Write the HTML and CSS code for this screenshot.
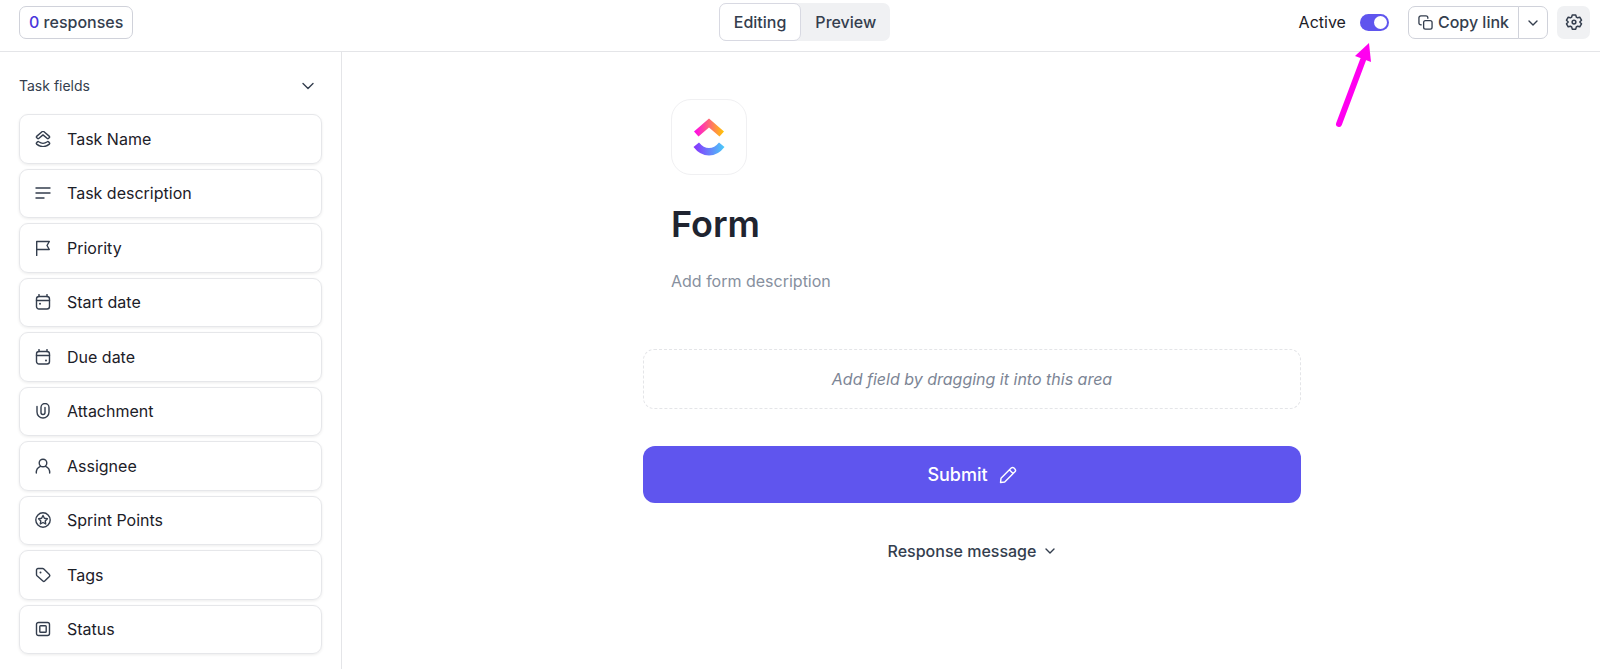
FILE: index.html
```html
<!DOCTYPE html>
<html lang="en">
<head>
  <meta charset="UTF-8">
  <meta name="viewport" content="width=device-width, initial-scale=1.0">
  <title>Form</title>
  <link rel="stylesheet" href="styles.css">
</head>
<body>

  <header class="topbar">
    <div class="topbar-left">
      <button type="button" class="btn responses"><span class="count">0</span> responses</button>
    </div>

    <div class="tabs">
      <button type="button" class="tab active">Editing</button>
      <button type="button" class="tab">Preview</button>
    </div>

    <div class="topbar-right">
      <label class="active-label" for="activeToggle">Active</label>
      <div class="toggle-wrap">
        <input type="checkbox" id="activeToggle" class="toggle" checked>
        <svg class="arrow" width="40" height="88" viewBox="0 0 40 88" aria-hidden="true">
          <path d="M6 82 30 18" stroke="#ff00f0" stroke-width="6" stroke-linecap="round" fill="none"/>
          <path d="M36 1 38 20 22 14z" fill="#ff00f0"/>
        </svg>
      </div>
      <div class="split">
        <button type="button" class="btn copy">
          <svg width="15" height="15" viewBox="0 0 16 16"><rect x="6" y="6" width="9" height="9" rx="2"/><path d="M3.500 10.500H3a2 2 0 0 1-2-2V3a2 2 0 0 1 2-2h5.500a2 2 0 0 1 2 2v.5"/></svg>
          Copy link
        </button>
        <button type="button" class="btn more" aria-label="More link options">
          <svg width="10" height="10" viewBox="0 0 10 10"><path d="M1 3l4 4 4-4"/></svg>
        </button>
      </div>
      <button type="button" class="gear" aria-label="Settings">
        <svg width="18" height="18" viewBox="0 0 24 24"><path d="M9.700 2.500h4.600l.8 2.900 1.700 1 2.900-.8 2.300 4-2.100 2.100v.6l2.100 2.100-2.300 4-2.900-.8-1.700 1-.8 2.900H9.700l-.8-2.900-1.700-1-2.900.8-2.300-4 2.100-2.100v-.6L2 9.600l2.300-4 2.900.8 1.700-1z"/><circle cx="12" cy="12" r="2.500"/></svg>
      </button>
    </div>
  </header>

  <div class="layout">
    <aside class="sidebar">
      <button type="button" class="section-title">
        Task fields
        <svg width="14" height="14" viewBox="0 0 14 14"><path d="M2 4.500l5 5 5-5"/></svg>
      </button>
      <ul class="fields">
        <li class="field">
          <svg width="16" height="16" viewBox="0 0 16 16"><path d="M1.600 5.400 7 .7q1-.8 2 0l5.400 4.700q.5.500 0 1.100l-1 1q-.5.500-1.100 0L8 3.900 3.700 7.500q-.6.500-1.100 0l-1-1q-.5-.6 0-1.100z"/><path d="M1.500 12l1-1.200q.6-.6 1.200-.1 4.300 3.300 8.600 0 .6-.5 1.200.1l1 1.200q.4.600-.1 1.100-6.400 5-12.800 0-.5-.5-.1-1.100z"/></svg>
          Task Name
        </li>
        <li class="field">
          <svg width="16" height="16" viewBox="0 0 16 16"><path d="M1 3h14M1 8h14M1 13h8"/></svg>
          Task description
        </li>
        <li class="field">
          <svg width="16" height="16" viewBox="0 0 16 16"><path d="M1.700 15.500V1.500h12.600l-2.300 4 2.300 4H1.700"/></svg>
          Priority
        </li>
        <li class="field">
          <svg width="16" height="16" viewBox="0 0 16 16"><rect x="1.500" y="2.500" width="13" height="12.500" rx="2.500"/><path d="M1.500 6.500h13M4 .500v2M12 .500v2"/><circle class="dot" cx="5" cy="9.700" r="1"/></svg>
          Start date
        </li>
        <li class="field">
          <svg width="16" height="16" viewBox="0 0 16 16"><rect x="1.500" y="2.500" width="13" height="12.500" rx="2.500"/><path d="M1.500 6.500h13M4 .500v2M12 .500v2"/><circle class="dot" cx="11" cy="11.500" r="1"/></svg>
          Due date
        </li>
        <li class="field">
          <svg width="16" height="16" viewBox="0 0 16 16"><path d="M2 3.500V9a6 6 0 0 0 12 0V4.500a4 4 0 0 0-8 0V9.500a2 2 0 0 0 4 0V4.500"/></svg>
          Attachment
        </li>
        <li class="field">
          <svg width="16" height="16" viewBox="0 0 16 16"><circle cx="8" cy="5" r="3.800"/><path d="M1.300 15a6.800 6.800 0 0 1 4.200-6.700M14.700 15a6.800 6.800 0 0 0-4.200-6.700"/></svg>
          Assignee
        </li>
        <li class="field">
          <svg width="16" height="16" viewBox="0 0 16 16"><circle cx="8" cy="8" r="7.200"/><path d="M8 3.500l1.400 2.800 3 .4-2.200 2.200.5 3.100L8 10.500 5.300 12l.5-3.100-2.200-2.200 3-.4z"/></svg>
          Sprint Points
        </li>
        <li class="field">
          <svg width="16" height="16" viewBox="0 0 16 16"><path d="M1.500 3a1.500 1.500 0 0 1 1.500-1.500h4.600q.7 0 1.200.5l5.600 5.600q.8.900 0 1.800l-4.700 4.700q-.9.800-1.800 0L2 8.700q-.5-.5-.5-1.200z"/><circle class="dot" cx="5.500" cy="5.500" r="1"/></svg>
          Tags
        </li>
        <li class="field">
          <svg width="16" height="16" viewBox="0 0 16 16"><rect x="1.500" y="1.500" width="13" height="13" rx="2"/><rect x="4.800" y="4.800" width="6.400" height="6.400" rx=".8"/></svg>
          Status
        </li>
      </ul>
    </aside>

    <main class="main">
      <div class="form">
        <div class="form-head">
          <div class="logo">
            <svg width="32" height="38" viewBox="0 0 32 38">
              <defs>
                <linearGradient id="roof"><stop offset="0" stop-color="#ff02f0"/><stop offset="1" stop-color="#ffc800"/></linearGradient>
                <linearGradient id="smile"><stop offset="0" stop-color="#8930fd"/><stop offset="1" stop-color="#49ccf9"/></linearGradient>
              </defs>
              <path d="M1 13.500 16 .5 31 13.500 26.500 18.500 16 9.500 5.500 18.500z" fill="url(#roof)"/>
              <path d="M.5 29 6 24.500Q10.500 30 16 30T26 24.500L31.500 29Q25 37.500 16 37.500T.5 29z" fill="url(#smile)"/>
            </svg>
          </div>
          <h1>Form</h1>
          <p class="description">Add form description</p>
        </div>
        <div class="dropzone">Add field by dragging it into this area</div>
        <button type="button" class="submit">
          Submit
          <svg width="18" height="18" viewBox="0 0 18 18"><path d="M1.500 16.500l.5-4.200L12.200 2.100a2 2 0 0 1 2.800 0l.9.900a2 2 0 0 1 0 2.800L5.700 16zM10.500 4l3.600 3.600"/></svg>
        </button>
        <button type="button" class="response-message">
          Response message
          <svg width="12" height="12" viewBox="0 0 12 12"><path d="M2 4l4 4 4-4"/></svg>
        </button>
      </div>
    </main>
  </div>

</body>
</html>
```
FILE: styles.css
```css
* {
  box-sizing: border-box;
}

body {
  margin: 0;
  font-family: Inter, sans-serif;
  font-size: 16px;
  line-height: 24px;
  color: #2a2e34;
  background: #fff;
}

button {
  font: inherit;
  color: inherit;
  background: none;
  border: none;
  padding: 0;
  cursor: pointer;
}

svg {
  flex: none;
  fill: none;
  stroke: currentColor;
  stroke-width: 1.4;
  stroke-linecap: round;
  stroke-linejoin: round;
}

/* top bar */
.topbar {
  display: grid;
  grid-template-columns: 1fr auto 1fr;
  align-items: center;
  height: 52px;
  padding: 0 10px 7px 19px;
  border-bottom: 1px solid #e4e5e8;
  color: #343e4e;
}

.btn {
  height: 33px;
  padding: 0 9px;
  border: 1px solid #d0d2da;
  border-radius: 7px;
  font-weight: 500;
  background: #fff;
}

.count {
  color: #4a36dc;
}

.tabs {
  display: flex;
  height: 38px;
  border-radius: 7px;
  background: #f0f1f3;
}

.tab {
  padding: 0 14px;
  font-weight: 500;
}

.tab.active {
  border: 1px solid #d8d9e2;
  border-radius: 7px;
  background: #fff;
}

.topbar-right {
  display: flex;
  justify-content: flex-end;
  align-items: center;
}

.active-label {
  margin-right: 14px;
  color: #1c2028;
}

.toggle-wrap {
  position: relative;
  display: flex;
  margin-right: 19px;
}

.toggle {
  appearance: none;
  width: 29px;
  height: 17px;
  margin: 0;
  padding: 2px;
  border-radius: 9px;
  background: #5f55ee;
  cursor: pointer;
}

.toggle::before {
  content: "";
  display: block;
  width: 13px;
  height: 13px;
  border-radius: 50%;
  background: #fff;
}

.toggle:checked::before {
  margin-left: auto;
}

.arrow {
  position: absolute;
  top: 28px;
  right: 16px;
  stroke: none;
  pointer-events: none;
}

.split {
  display: flex;
  margin-right: 9px;
}

.copy {
  display: flex;
  align-items: center;
  gap: 5px;
  border-radius: 7px 0 0 7px;
}

.more {
  margin-left: -1px;
  border-radius: 0 7px 7px 0;
}

.gear {
  display: flex;
  align-items: center;
  justify-content: center;
  width: 33px;
  height: 33px;
  border-radius: 7px;
  background: #f0f1f3;
}

.gear svg {
  stroke-width: 2;
}

/* sidebar */
.layout {
  display: flex;
  min-height: calc(100vh - 52px);
}

.sidebar {
  display: flex;
  flex-direction: column;
  width: 342px;
  padding: 22px 19px 15px;
  border-right: 1px solid #e4e5e8;
}

.section-title {
  display: flex;
  justify-content: space-between;
  align-items: center;
  padding-right: 7px;
  margin-bottom: 16px;
  font-size: 14px;
  color: #343e4e;
}

.fields {
  flex: 1;
  display: flex;
  flex-direction: column;
  gap: 5px;
  margin: 0;
  padding: 0;
  list-style: none;
}

.field {
  flex: 1;
  display: flex;
  align-items: center;
  gap: 16px;
  min-height: 48px;
  padding: 0 15px;
  border: 1px solid #e6e7ea;
  border-radius: 9px;
  box-shadow: 0 1px 3px rgba(0, 0, 0, 0.08);
  color: #1c2028;
}

.field svg {
  color: #343e4e;
}

.dot {
  fill: currentColor;
  stroke: none;
}

/* form */
.main {
  flex: 1;
  padding: 47px 20px 47px 22px;
}

.form {
  display: flex;
  flex-direction: column;
  align-items: stretch;
  max-width: 658px;
  margin: 0 auto;
}

.form-head {
  padding: 0 28px;
}

.logo {
  display: flex;
  align-items: center;
  justify-content: center;
  width: 76px;
  height: 76px;
  border: 1px solid #f0f0f2;
  border-radius: 20px;
}

.logo svg {
  stroke: none;
}

h1 {
  margin: 25px 0 21px;
  font-size: 36px;
  font-weight: 600;
  line-height: 48px;
  color: #202430;
}

.description {
  margin: 0;
  color: #87909e;
}

.dropzone {
  margin: 56px 0 37px;
  padding: 17px;
  border: 1px dashed #e4e5e8;
  border-radius: 11px;
  font-style: italic;
  text-align: center;
  color: #7c8595;
}

.submit {
  display: flex;
  align-items: center;
  justify-content: center;
  gap: 11px;
  height: 57px;
  border-radius: 12px;
  font-size: 18px;
  font-weight: 500;
  color: #fff;
  background: #5f55ee;
}

.response-message {
  display: flex;
  align-items: center;
  align-self: center;
  gap: 8px;
  margin-top: 36px;
  font-weight: 500;
  color: #343e4e;
}
```
